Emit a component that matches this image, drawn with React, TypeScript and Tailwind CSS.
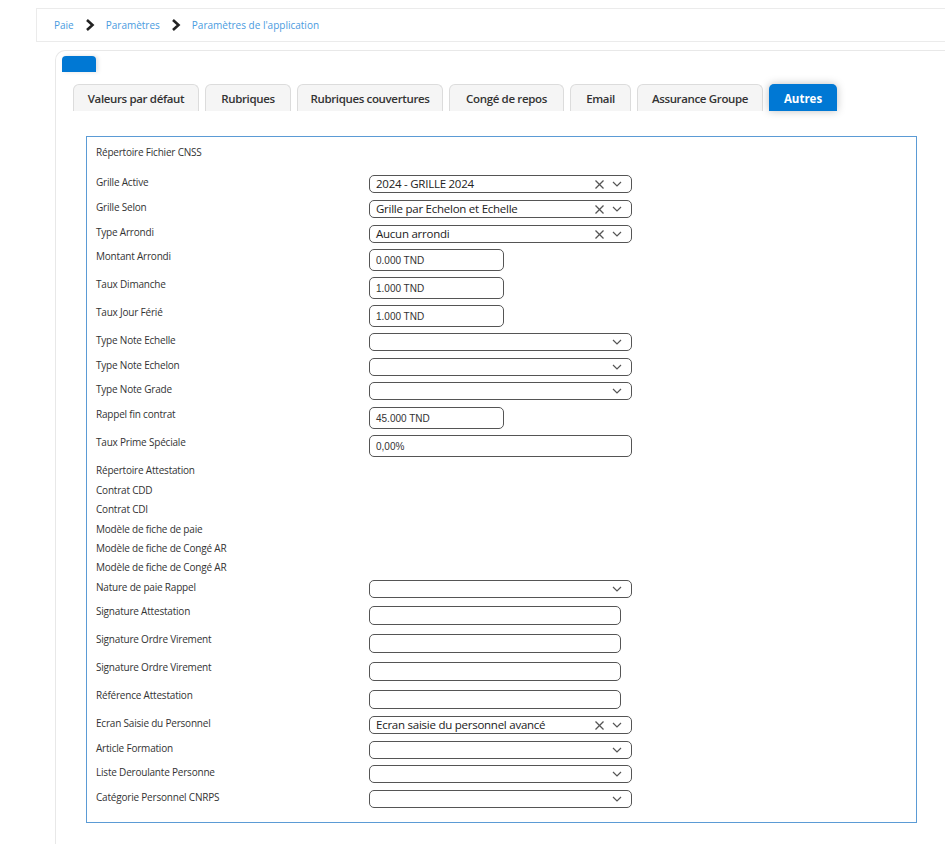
import React from "react";

type Row =
  | { kind: "label"; label: string; h: number }
  | { kind: "select"; label: string; h: number; value?: string }
  | { kind: "num"; label: string; h: number; value: string; wide?: boolean }
  | { kind: "text"; label: string; h: number };

const rows: Row[] = [
  { kind: "label", label: "Répertoire Fichier CNSS", h: 30 },
  { kind: "select", label: "Grille Active", h: 25, value: "2024 - GRILLE 2024" },
  { kind: "select", label: "Grille Selon", h: 25, value: "Grille par Echelon et Echelle" },
  { kind: "select", label: "Type Arrondi", h: 24, value: "Aucun arrondi" },
  { kind: "num", label: "Montant Arrondi", h: 28, value: "0.000 TND" },
  { kind: "num", label: "Taux Dimanche", h: 28, value: "1.000 TND" },
  { kind: "num", label: "Taux Jour Férié", h: 28, value: "1.000 TND" },
  { kind: "select", label: "Type Note Echelle", h: 25 },
  { kind: "select", label: "Type Note Echelon", h: 24 },
  { kind: "select", label: "Type Note Grade", h: 25 },
  { kind: "num", label: "Rappel fin contrat", h: 28, value: "45.000 TND" },
  { kind: "num", label: "Taux Prime Spéciale", h: 28, value: "0,00%", wide: true },
  { kind: "label", label: "Répertoire Attestation", h: 20 },
  { kind: "label", label: "Contrat CDD", h: 19 },
  { kind: "label", label: "Contrat CDI", h: 20 },
  { kind: "label", label: "Modèle de fiche de paie", h: 19 },
  { kind: "label", label: "Modèle de fiche de Congé AR", h: 19 },
  { kind: "label", label: "Modèle de fiche de Congé AR", h: 20 },
  { kind: "select", label: "Nature de paie Rappel", h: 24 },
  { kind: "text", label: "Signature Attestation", h: 28 },
  { kind: "text", label: "Signature Ordre Virement", h: 28 },
  { kind: "text", label: "Signature Ordre Virement", h: 28 },
  { kind: "text", label: "Référence Attestation", h: 28 },
  { kind: "select", label: "Ecran Saisie du Personnel", h: 25, value: "Ecran saisie du personnel avancé" },
  { kind: "select", label: "Article Formation", h: 24 },
  { kind: "select", label: "Liste Deroulante Personne", h: 25 },
  { kind: "select", label: "Catégorie Personnel CNRPS", h: 18 },
];

const tabs = [
  { name: "Valeurs par défaut", w: "w-[126px]" },
  { name: "Rubriques", w: "w-[86px]" },
  { name: "Rubriques couvertures", w: "w-[146px]" },
  { name: "Congé de repos", w: "w-[115px]" },
  { name: "Email", w: "w-[61px]" },
  { name: "Assurance Groupe", w: "w-[126px]" },
];

function Chevron() {
  return (
    <svg width="10" height="6" viewBox="0 0 10 6" fill="none">
      <polyline points="1,1 5,5 9,1" stroke="#555" strokeWidth="1.2" />
    </svg>
  );
}

function Cross() {
  return (
    <svg width="9" height="9" viewBox="0 0 9 9" fill="none">
      <line x1="0.5" y1="0.5" x2="8.5" y2="8.5" stroke="#555" strokeWidth="1.2" />
      <line x1="8.5" y1="0.5" x2="0.5" y2="8.5" stroke="#555" strokeWidth="1.2" />
    </svg>
  );
}

function Crumb() {
  return (
    <svg width="10" height="12" viewBox="0 0 10 12" fill="none">
      <polyline points="2,1 7.5,6 2,11" stroke="#222" strokeWidth="2.6" />
    </svg>
  );
}

function Control({ row }: { row: Row }) {
  if (row.kind === "select") {
    return (
      <div className="w-[263px] h-[18px] border border-[#555] rounded-[5px] flex items-center pl-[6px] pr-[9px]">
        <span className="flex-1 text-[11.5px] leading-[16px] text-[#222] tracking-[-0.25px] whitespace-nowrap">
          {row.value ?? ""}
        </span>
        {row.value ? (
          <span className="mr-[8px] flex items-center">
            <Cross />
          </span>
        ) : null}
        <Chevron />
      </div>
    );
  }
  if (row.kind === "num") {
    return (
      <div
        className={`${row.wide ? "w-[263px]" : "w-[135px]"} h-[22px] border border-[#555] rounded-[5px] flex items-center pl-[6px] font-['Liberation_Sans',Arial,sans-serif] text-[10px] text-[#333]`}
      >
        {row.value}
      </div>
    );
  }
  if (row.kind === "text") {
    return <div className="mt-[2px] w-[252px] h-[19px] border border-[#555] rounded-[5px]" />;
  }
  return null;
}

export default function App() {
  return (
    <div className="min-h-screen bg-white font-['Open_Sans',sans-serif] overflow-hidden">
      <div className="ml-[36px] mt-[8px] h-[34px] border border-r-0 border-[#ebebeb] flex items-center pl-[17px] text-[10px] text-[#4a9be0]">
        <span>Paie</span>
        <span className="mx-[11px] flex items-center">
          <Crumb />
        </span>
        <span>Paramètres</span>
        <span className="mx-[11px] flex items-center">
          <Crumb />
        </span>
        <span>Paramètres de l'application</span>
      </div>

      <div className="ml-[55px] mt-[8px] border-l border-t border-[#e8e8e8] rounded-tl-[10px] pt-[5px] min-h-[800px]">
        <div className="ml-[6px] w-[34px] h-[16px] bg-[#0078d4] rounded-t-[4px] shadow-[2px_0_4px_rgba(0,0,0,0.12)]" />

        <div className="mt-[12px] ml-[17px] flex gap-[6px]">
          {tabs.map((t) => (
            <div
              key={t.name}
              className={`${t.w} h-[27px] pt-[2px] border border-b-0 border-[#dcdcdc] rounded-t-[6px] bg-[#f5f5f5] flex items-center justify-center text-[11.5px] font-semibold text-[#333] tracking-[-0.35px]`}
            >
              {t.name}
            </div>
          ))}
          <div className="w-[68px] h-[27px] pt-[2px] rounded-t-[5px] bg-[#0078d4] flex items-center justify-center text-[11.5px] font-bold text-white shadow-[0_0_8px_rgba(0,0,0,0.25)]">
            Autres
          </div>
        </div>

        <div className="mt-[25px] ml-[30px] w-[831px] border border-[#5b9bd5] pt-[8px] pb-[14px] pl-[9px]">
          {rows.map((r, i) => (
            <div key={i} className="flex" style={{ height: r.h }}>
              <div className="w-[273px] shrink-0 text-[10px] leading-[14px] text-[#333] tracking-[-0.2px]">
                {r.label}
              </div>
              <Control row={r} />
            </div>
          ))}
        </div>
      </div>
    </div>
  );
}
